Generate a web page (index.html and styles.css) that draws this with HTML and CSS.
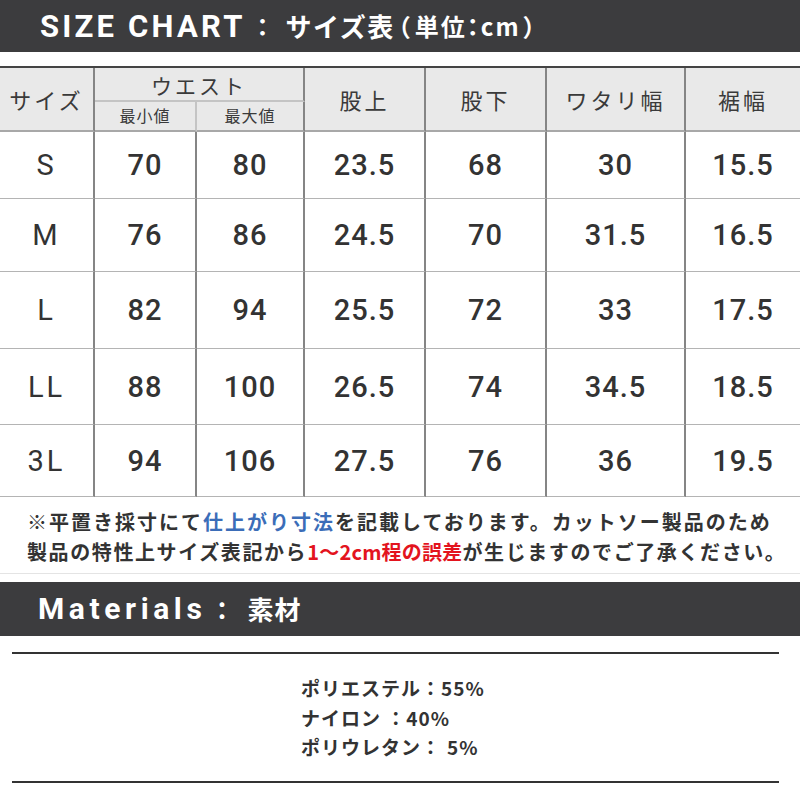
FILE: index.html
```html
<!DOCTYPE html>
<html lang="ja">
<head>
<meta charset="utf-8">
<link rel="stylesheet" href="styles.css">
</head>
<body>
<div class="page">
  <div class="bar bar-size">
    <span class="bar-en">SIZE CHART</span><span class="bar-colon">：</span><span class="bar-jp">サイズ表</span><span class="bar-unit"><span class="paren">（</span>単位：cm<span class="paren">）</span></span>
  </div>

  <div class="table">
    <div class="cell head span2r">サイズ</div>
    <div class="cell head top span2c">ウエスト</div>
    <div class="cell head span2r">股上</div>
    <div class="cell head span2r">股下</div>
    <div class="cell head span2r">ワタリ幅</div>
    <div class="cell head span2r last">裾幅</div>
    <div class="cell head sub subl">最小値</div>
    <div class="cell head sub">最大値</div>

    <div class="cell size">S</div><div class="cell num">70</div><div class="cell num">80</div><div class="cell num">23.5</div><div class="cell num">68</div><div class="cell num">30</div><div class="cell num last">15.5</div>
    <div class="cell size">M</div><div class="cell num">76</div><div class="cell num">86</div><div class="cell num">24.5</div><div class="cell num">70</div><div class="cell num">31.5</div><div class="cell num last">16.5</div>
    <div class="cell size">L</div><div class="cell num">82</div><div class="cell num">94</div><div class="cell num">25.5</div><div class="cell num">72</div><div class="cell num">33</div><div class="cell num last">17.5</div>
    <div class="cell size">LL</div><div class="cell num">88</div><div class="cell num">100</div><div class="cell num">26.5</div><div class="cell num">74</div><div class="cell num">34.5</div><div class="cell num last">18.5</div>
    <div class="cell size">3L</div><div class="cell num">94</div><div class="cell num">106</div><div class="cell num">27.5</div><div class="cell num">76</div><div class="cell num">36</div><div class="cell num last">19.5</div>
  </div>

  <div class="notes">
    <p class="n1">※平置き採寸にて<span class="blue">仕上がり寸法</span>を記載しております。カットソー製品のため</p>
    <p class="n2">製品の特性上サイズ表記から<span class="red">1〜2cm程の誤差</span>が生じますのでご了承ください。</p>
  </div>

  <div class="bar bar-mat">
    <span class="bar-en mat">Materials</span><span class="bar-colon mat">：</span><span class="bar-jp mat">素材</span>
  </div>

  <div class="materials">
    <p>ポリエステル：55%</p>
    <p>ナイロン ：40%</p>
    <p>ポリウレタン：<span class="pct">5%</span></p>
  </div>
</div>
</body>
</html>
```

FILE: styles.css
```css
* { box-sizing: border-box; margin: 0; padding: 0; }
html, body { background: #fff; }
body {
  margin: 0;
  width: 800px;
  height: 800px;
  overflow: hidden;
  font-family: "Noto Sans CJK JP", "Noto Sans", sans-serif;
  color: #333;
}
.page { display: flex; flex-direction: column; }

.bar {
  background: #3c3c3e;
  color: #fff;
  display: flex;
  align-items: center;
  font-weight: 700;
  white-space: nowrap;
}
.bar-size { height: 52px; padding-left: 40px; }
.bar-en {
  font-family: "Roboto", "Noto Sans", sans-serif;
  font-weight: 700;
  font-size: 31px;
  letter-spacing: 3.2px;
  line-height: 1;
}
.bar-colon {
  font-family: "Noto Sans CJK JP", sans-serif;
  font-weight: 700;
  font-size: 24px;
  line-height: 1;
  margin: 0 11px 0 5px;
}
.bar-jp {
  font-family: "Noto Sans CJK JP", sans-serif;
  font-weight: 700;
  font-size: 26px;
  letter-spacing: 1.5px;
  line-height: 1;
}
.bar-unit {
  font-family: "Noto Sans CJK JP", sans-serif;
  font-weight: 700;
  font-size: 24px;
  letter-spacing: 2px;
  line-height: 1;
  font-feature-settings: "palt";
}
.paren { margin: 0 3px; }
.bar-mat { height: 54px; padding-left: 38px; margin-top: 8px; }
.bar-en.mat { font-size: 30px; letter-spacing: 4.6px; }
.bar-colon.mat { font-size: 25px; margin: 0 13px 0 3px; }
.bar-jp.mat { font-size: 26px; letter-spacing: 1px; }

.table {
  margin-top: 14px;
  border-top: 2px solid #444;
  display: grid;
  grid-template-columns: 95px 102px 108px 121px 121px 139px 114px;
  grid-template-rows: 34px 30px 67px 73px 77px 76px 72px;
}
.cell {
  display: flex;
  align-items: center;
  justify-content: center;
  border-right: 2px solid #858585;
  border-bottom: 1px solid #b4b4b4;
}
.cell.last { border-right: none; }
.head {
  background: #e9e9e9;
  font-size: 22px;
  letter-spacing: 3px;
  color: #3a3a3a;
  border-bottom: 2px solid #a8a8a8;
}
.head.top { border-bottom: 2px solid #c4c4c4; padding-top: 2px; font-size: 21px; }
.span2r { grid-row: span 2; }
.span2c { grid-column: span 2; }
.head.sub { font-size: 16px; letter-spacing: 1px; padding-bottom: 2px; }
.head.subl { border-right: 2px solid #c4c4c4; }

.size {
  font-family: "Roboto", sans-serif;
  font-size: 29px;
  font-weight: 400;
  letter-spacing: 3px;
  color: #333;
}
.num {
  font-family: "Roboto", sans-serif;
  font-size: 29px;
  font-weight: 500;
  letter-spacing: 1px;
  color: #333;
}

.notes {
  padding: 10px 0 6px 27px;
  border-bottom: 1px solid #e4e4e4;
}
.notes p {
  font-size: 20px;
  font-weight: 700;
  line-height: 30px;
  color: #333;
  white-space: nowrap;
}
.notes .n1 { letter-spacing: 2px; }
.notes .n2 { letter-spacing: 1.6px; }
.blue { color: #3b6db8; }
.red { color: #e3141e; letter-spacing: 0.2px; }

.materials {
  margin: 16px 21px 0 12px;
  border-top: 2px solid #333;
  border-bottom: 2px solid #333;
  padding: 19px 0 19px 289px;
}
.materials p {
  font-size: 19px;
  font-weight: 700;
  letter-spacing: 1px;
  line-height: 29.5px;
  color: #333;
}
.pct { margin-left: 6px; }
```
